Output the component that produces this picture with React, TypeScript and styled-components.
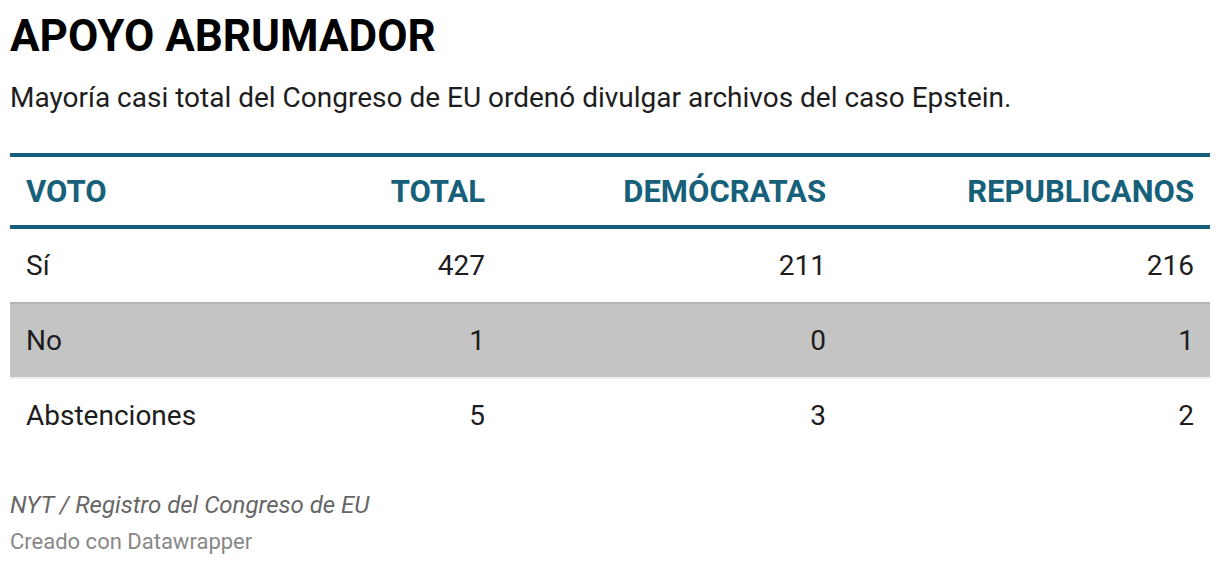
import styled, { createGlobalStyle } from 'styled-components'

const GlobalStyle = createGlobalStyle`
  html, body {
    margin: 0;
    padding: 0;
    background: #ffffff;
  }
  body {
    font-family: Roboto, 'Liberation Sans', sans-serif;
    color: #1d1d1d;
  }
`

type Row = {
  label: string
  total: number
  dem: number
  rep: number
  shaded?: boolean
}

const ROWS: Row[] = [
  { label: 'Sí', total: 427, dem: 211, rep: 216 },
  { label: 'No', total: 1, dem: 0, rep: 1, shaded: true },
  { label: 'Abstenciones', total: 5, dem: 3, rep: 2 },
]

const TEAL = '#17607a'

export default function App() {
  return (
    <>
      <GlobalStyle />
      <Chart>
        <Title>APOYO ABRUMADOR</Title>
        <Description>
          Mayoría casi total del Congreso de EU ordenó divulgar archivos del caso Epstein.
        </Description>
        <Table>
          <HeaderRow>
            <HeadCell>VOTO</HeadCell>
            <HeadCell $right>TOTAL</HeadCell>
            <HeadCell $right>DEMÓCRATAS</HeadCell>
            <HeadCell $right>REPUBLICANOS</HeadCell>
          </HeaderRow>
          {ROWS.map((row, i) => (
            <BodyRow key={row.label} $shaded={row.shaded} $first={i === 0}>
              <Cell>{row.label}</Cell>
              <Cell $right>{row.total}</Cell>
              <Cell $right>{row.dem}</Cell>
              <Cell $right>{row.rep}</Cell>
            </BodyRow>
          ))}
        </Table>
        <Footer>
          <Source>NYT / Registro del Congreso de EU</Source>
          <Credit>Creado con Datawrapper</Credit>
        </Footer>
      </Chart>
    </>
  )
}

const Chart = styled.div`
  width: 1200px;
  padding: 10px 10px 0;
`

const Title = styled.h1`
  margin: 0;
  font-size: 44px;
  line-height: 52px;
  font-weight: 700;
  color: #000000;
`

const Description = styled.p`
  margin: 19px 0 0;
  font-size: 28px;
  line-height: 34px;
  font-weight: 400;
  color: #1d1d1d;
`

const Table = styled.div`
  margin-top: 38px;
  border-top: 4px solid ${TEAL};
`

const columns = `
  display: grid;
  grid-template-columns: 245px 246px 341px 368px;
  align-items: center;
`

const HeaderRow = styled.div`
  ${columns}
  height: 68px;
  border-bottom: 4px solid ${TEAL};
`

const BodyRow = styled.div<{ $shaded?: boolean; $first?: boolean }>`
  ${columns}
  height: 73px;
  background: ${(p) => (p.$shaded ? '#c4c4c4' : 'transparent')};
  border-bottom: 2px solid
    ${(p) => (p.$first ? '#b5b5b5' : p.$shaded ? '#f0f0f0' : 'transparent')};
`

const HeadCell = styled.div<{ $right?: boolean }>`
  padding: 0 16px;
  text-align: ${(p) => (p.$right ? 'right' : 'left')};
  font-size: 31px;
  font-weight: 700;
  color: ${TEAL};
`

const Cell = styled.div<{ $right?: boolean }>`
  padding: 0 16px;
  text-align: ${(p) => (p.$right ? 'right' : 'left')};
  font-size: 28px;
  color: #1d1d1d;
`

const Footer = styled.div`
  margin-top: 36px;
  display: flex;
  flex-direction: column;
  gap: 8px;
`

const Source = styled.div`
  font-size: 24px;
  line-height: 30px;
  font-style: italic;
  color: #666666;
`

const Credit = styled.div`
  font-size: 22px;
  line-height: 28px;
  color: #888888;
`
